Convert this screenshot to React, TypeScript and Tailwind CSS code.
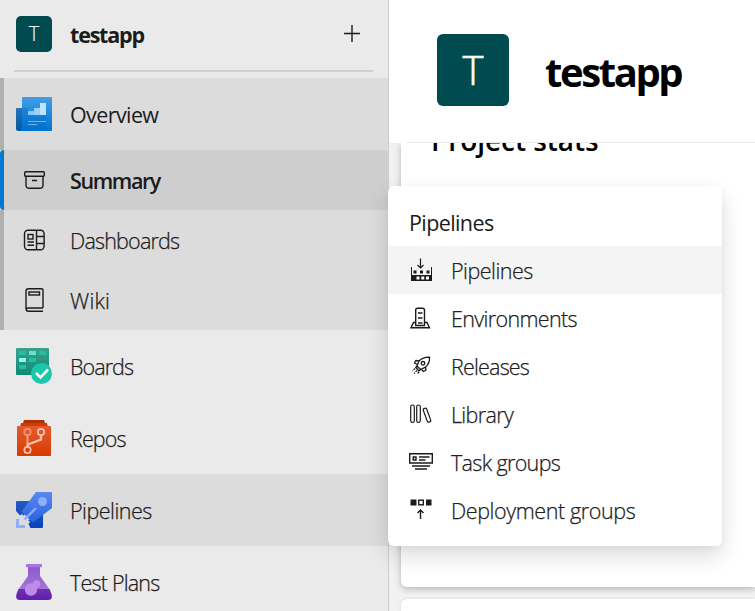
import type { ReactNode } from "react";

const stroke = { fill: "none", stroke: "#1b1b1b", strokeWidth: 1.4 } as const;

function OverviewIcon() {
  return (
    <svg width="36" height="36" viewBox="0 0 36 36">
      <defs>
        <linearGradient id="ov" x1="0" y1="0" x2="0" y2="1">
          <stop offset="0" stopColor="#439de4" />
          <stop offset="1" stopColor="#0074d3" />
        </linearGradient>
        <linearGradient id="ovb" x1="0" y1="0" x2="0" y2="1">
          <stop offset="0" stopColor="#2874b5" />
          <stop offset="1" stopColor="#0059a4" />
        </linearGradient>
      </defs>
      <path d="M1 12H8V35H2.500Q0 35 0 32.500V13Q0 12 1 12Z" fill="url(#ovb)" />
      <path d="M7 1H35Q36 1 36 2V34Q36 35 35 35H4Q6 34 6 31V2Q6 1 7 1Z" fill="url(#ov)" />
      <path d="M6 12H12V18H30V35H4Q6 34 6 31Z" fill="#0067c5" opacity=".3" />
      <path d="M12 15H18V12H24V19H12Z" fill="#86c8ff" />
      <path d="M18 12H24V7H30V19H18Z" fill="#9ad1fc" />
      <path d="M24 7H30V19H24Z" fill="#c0e3ff" />
      <path d="M12 25.500H30M12 28.500H21" stroke="#69b5f3" strokeWidth="1" />
    </svg>
  );
}

function BoardsIcon() {
  return (
    <svg width="36" height="36" viewBox="0 0 36 36">
      <defs>
        <linearGradient id="bd" x1="0" y1="0" x2="0" y2="1">
          <stop offset="0" stopColor="#37a38e" />
          <stop offset="1" stopColor="#118a73" />
        </linearGradient>
      </defs>
      <rect width="33" height="27" rx="1" fill="url(#bd)" />
      <path d="M3 3H10V7H3ZM23 3H30V7H23ZM13 10H20V14H13ZM3 17H10V21H3Z" fill="#27bda2" />
      <path d="M13 3H20V7H13Z" fill="#66e4cb" />
      <path d="M3 10H10V14H3Z" fill="#85ffe8" />
      <circle cx="25.500" cy="25.500" r="10.500" fill="#1bc6ab" />
      <path d="M20 25L24.500 29.500L32 21.500" fill="none" stroke="#f4fffd" strokeWidth="2.600" />
    </svg>
  );
}

function ReposIcon() {
  return (
    <svg width="36" height="36" viewBox="0 0 36 36">
      <defs>
        <linearGradient id="rp" x1="0" y1="0" x2="0" y2="1">
          <stop offset="0" stopColor="#e35b30" />
          <stop offset="1" stopColor="#d83b01" />
        </linearGradient>
      </defs>
      <path d="M8 0H28L29 3V6H7V3Z" fill="#b23100" />
      <path d="M5 3H31L32 7H4Z" fill="#d13c05" />
      <rect x="1" y="6" width="34" height="30" rx="1" fill="url(#rp)" />
      <g fill="none" stroke="#ffc1ab" strokeWidth="1.700">
        <circle cx="11.500" cy="12" r="3.200" stroke="#f3946f" />
        <circle cx="25" cy="12" r="3.200" />
        <circle cx="11.500" cy="30" r="3.200" />
        <path d="M11.500 15.500V26" stroke="#f3946f" strokeWidth="2.400" />
        <path d="M25 15.500V19.500L12 24.500V27" strokeWidth="2.400" />
      </g>
    </svg>
  );
}

function RocketIcon() {
  return (
    <svg width="36" height="36" viewBox="0 0 36 36">
      <defs>
        <linearGradient id="pl" x1="0" y1="0" x2="0" y2="1">
          <stop offset="0" stopColor="#5989f0" />
          <stop offset="1" stopColor="#2864de" />
        </linearGradient>
        <linearGradient id="plb" x1="0" y1="0" x2="0" y2="1">
          <stop offset="0" stopColor="#2458c2" />
          <stop offset="1" stopColor="#0b43bd" />
        </linearGradient>
      </defs>
      <path d="M1 9H17L27 20V35Q27 36 26 36H14.500L12.500 32L14 30L6 22L4 23.500L0 19V10Q0 9 1 9Z" fill="url(#plb)" />
      <path d="M20 0H35Q36 0 36 1V16L17 30.500L13.500 28L8 22.500L5.500 19.500Z" fill="url(#pl)" />
      <path d="M8.500 22.500L13.500 27.500L11 29L7 25Z" fill="#dcdcdc" />
      <path d="M20 16L8.500 27.500" stroke="#8aabff" strokeWidth="2.400" />
      <circle cx="26.500" cy="9.500" r="4.500" fill="#8faeff" />
      <path d="M0 27H3V33H9V36H0Z" fill="#8faeff" />
    </svg>
  );
}

function FlaskIcon() {
  return (
    <svg width="36" height="36" viewBox="0 0 36 36">
      <defs>
        <linearGradient id="fl" x1="0" y1="0" x2="0" y2="1">
          <stop offset="0" stopColor="#9158cf" />
          <stop offset="1" stopColor="#a077d6" />
        </linearGradient>
        <linearGradient id="fb" x1="0" y1="0" x2="0" y2="1">
          <stop offset="0" stopColor="#742cb4" />
          <stop offset="1" stopColor="#5d20ab" />
        </linearGradient>
      </defs>
      <path d="M12 3H24V12L34 26H2L12 12Z" fill="url(#fl)" />
      <path d="M2.500 25H33.500L35.500 30Q37 36 32 36H4Q-1 36 .5 30Z" fill="url(#fb)" />
      <rect x="10" y="0" width="16" height="3.200" rx=".8" fill="#a976e0" />
      <circle cx="20.500" cy="20" r="3.800" fill="#bd8ae9" />
      <circle cx="15" cy="25.500" r="6.200" fill="#bd8ae9" />
    </svg>
  );
}

function SummaryIcon() {
  return (
    <svg width="24" height="24" viewBox="0 0 24 24" {...stroke}>
      <rect x="2.700" y="3.700" width="19.600" height="4.600" rx="1" />
      <path d="M4 8.500V17Q4 20.300 7.300 20.300H17.700Q21 20.300 21 17V8.500M10 12.500H15" />
    </svg>
  );
}

function DashboardsIcon() {
  return (
    <svg width="24" height="24" viewBox="0 0 24 24" {...stroke}>
      <rect x="2.500" y="2.200" width="19.600" height="19.600" rx="3.500" />
      <path d="M14.500 2V22M14.500 8.500H22M14.500 15.500H22M5.500 14H12M5.500 17.300H12" />
      <rect x="6" y="6.500" width="5" height="4.500" />
    </svg>
  );
}

function WikiIcon() {
  return (
    <svg width="24" height="24" viewBox="0 0 24 24" {...stroke}>
      <path d="M21 20V2Q21 .7 19.500 .7H6.500Q4 .7 4 3V20.500Q4 23.300 6.500 23.300H21M4.200 21Q4.500 20 6 20H21" />
      <rect x="7" y="4" width="10.500" height="3" />
    </svg>
  );
}

function MenuPipelinesIcon() {
  return (
    <svg width="24" height="24" viewBox="0 0 24 24">
      <path d="M2 9H3V17H22V9H23V23H2Z" fill="#1b1b1b" />
      <path d="M4.500 12.500H7.500V15.500H4.500ZM11 12.500H14V15.500H11ZM17.500 12.500H20.500V15.500H17.500Z" fill="#1b1b1b" />
      <path d="M7.500 18.500H10.500V21.500H7.500ZM12.300 18.500H15.300V21.500H12.300ZM17 18.500H20V21.500H17Z" fill="#fff" />
      <path d="M11.500 .5V9.500M8.500 7L11.500 10L14.500 7" {...stroke} strokeWidth="1.200" />
    </svg>
  );
}

function EnvironmentsIcon() {
  return (
    <svg width="24" height="24" viewBox="0 0 24 24" {...stroke}>
      <path d="M6.700 19.500V4Q6.700 2.200 8.500 2.200H13.500Q15.500 2.200 15.500 4V19.500Z" />
      <path d="M6.500 16.500H4.500L2 21.800H20.500L18 16.500H15.700M9 7H13.500M9 12H13.500M9 17H13.500" />
    </svg>
  );
}

function ReleasesIcon() {
  return (
    <svg width="24" height="24" viewBox="0 0 24 24" {...stroke} strokeWidth="1.300">
      <path d="M8 12L10 7Q14 3 20.500 3.200Q21 9 16.500 13.200L11.500 15.500Z" />
      <circle cx="14" cy="9.300" r="1.800" />
      <path d="M10 7L7 6.500L5.500 9L8.500 10.500M16.500 13.200L17 16L14.500 17.500L12.500 15.500M8 12L6.800 13.500L10 17L11.500 15.500" />
      <path d="M6 14.500L3.500 17M8 16.500L5 19.500M10 18L8.500 19.500" strokeDasharray="2 1" />
    </svg>
  );
}

function LibraryIcon() {
  return (
    <svg width="24" height="24" viewBox="0 0 24 24" {...stroke} strokeWidth="1.200">
      <rect x="1.700" y="3" width="3.600" height="17.500" rx="1.700" />
      <rect x="7.700" y="3" width="3.600" height="17.500" rx="1.700" />
      <rect x="16.200" y="6" width="3.600" height="14.300" rx="1.200" transform="rotate(-20 18 13.150)" />
    </svg>
  );
}

function TaskGroupsIcon() {
  return (
    <svg width="24" height="24" viewBox="0 0 24 24" {...stroke}>
      <path d="M.7 3.700H23.300V13H.7ZM10 7H20.500M10 10H16.500M3 16H21M6 19H18" />
      <path d="M4.200 7H7V10H4.200Z" />
    </svg>
  );
}

function DeploymentIcon() {
  return (
    <svg width="24" height="24" viewBox="0 0 24 24">
      <path d="M1.500 1.500H7.500V7.500H1.500ZM17 1.500H22.500V7.500H17Z" fill="#1b1b1b" />
      <rect x="9.700" y="2.200" width="4.600" height="4.600" {...stroke} />
      <path d="M11.500 21V12M8.500 15L11.500 12L14.500 15" {...stroke} />
    </svg>
  );
}

function HubRow({ icon, label, className = "", text = "" }: { icon: ReactNode; label: string; className?: string; text?: string }) {
  return (
    <a className={`flex h-[72px] shrink-0 items-center gap-[18px] pl-4 ${className}`}>
      {icon}
      <span className={`pt-0.5 ${text}`}>{label}</span>
    </a>
  );
}

function SubRow({ icon, label, className = "border-[#b0b0b0]", text = "" }: { icon: ReactNode; label: string; className?: string; text?: string }) {
  return (
    <a className={`flex h-[60px] shrink-0 items-center gap-6 border-l-4 pl-[18px] ${className}`}>
      {icon}
      <span className={`pt-0.5 ${text}`}>{label}</span>
    </a>
  );
}

const menuItems = [
  { label: "Pipelines", icon: <MenuPipelinesIcon />, row: "bg-[#f4f4f4]", text: "tracking-[-0.5px]" },
  { label: "Environments", icon: <EnvironmentsIcon />, row: "", text: "tracking-[-0.65px]" },
  { label: "Releases", icon: <ReleasesIcon />, row: "", text: "tracking-[-0.8px]" },
  { label: "Library", icon: <LibraryIcon />, row: "", text: "tracking-[-0.65px]" },
  { label: "Task groups", icon: <TaskGroupsIcon />, row: "", text: "tracking-[-0.65px]" },
  { label: "Deployment groups", icon: <DeploymentIcon />, row: "", text: "tracking-[-0.4px]" },
];

function PipelinesMenu() {
  return (
    <div className="absolute left-[388px] top-[186px] h-[360px] w-[334px] rounded-md bg-white pt-3 text-[#202020] shadow-[0_10px_22px_rgba(0,0,0,0.14),0_2px_6px_rgba(0,0,0,0.04)]">
      <div className="flex h-12 items-center pl-[21px] pt-0.5 font-medium tracking-[-0.6px] text-[#1b1b1b]">Pipelines</div>
      {menuItems.map((item) => (
        <div key={item.label} className={`flex h-12 items-center gap-[18px] pl-[21px] ${item.row}`}>
          {item.icon}
          <span className={`whitespace-nowrap pt-0.5 font-light [-webkit-text-stroke:0.25px] ${item.text}`}>{item.label}</span>
        </div>
      ))}
    </div>
  );
}

export default function App() {
  return (
    <div className="relative flex h-[611px] w-[755px] overflow-hidden bg-white font-['Open_Sans','Noto_Sans',sans-serif] text-[21.5px] leading-[30px] text-[#1b1b1b]">
      <nav className="flex w-[389px] shrink-0 flex-col border-r border-[#cecece] bg-[#eaeaea]">
        <div className="h-[78px] shrink-0 pt-4">
          <div className="flex h-9 items-center pl-4 pr-[27px]">
            <div className="flex size-9 items-center justify-center rounded-[5px] bg-[#004b50] text-[20px] font-light text-[#edf3f3] [-webkit-text-stroke:0.2px]">T</div>
            <span className="ml-[18px] grow pt-0.5 font-bold tracking-[-1.2px] text-[#1b1b1b]">testapp</span>
            <svg width="18" height="18" viewBox="0 0 18 18" {...stroke}>
              <path d="M9 0V17M1 8.500H17" />
            </svg>
          </div>
          <div className="ml-3.5 mr-[15px] mt-[18px] h-0.5 bg-[#d0d0d0]" />
        </div>
        <HubRow icon={<OverviewIcon />} label="Overview" className="border-l-4 border-[#b0b0b0] bg-[#dcdcdc] !pl-3" text="font-medium tracking-[-0.6px]" />
        <div className="flex flex-col bg-[#dcdcdc]">
          <SubRow icon={<SummaryIcon />} label="Summary" className="rounded-sm border-[#0078d4] bg-[#cecece]" text="font-semibold tracking-[-1.4px]" />
          <SubRow icon={<DashboardsIcon />} label="Dashboards" text="font-light [-webkit-text-stroke:0.25px] tracking-[-0.8px]" />
          <SubRow icon={<WikiIcon />} label="Wiki" text="font-light [-webkit-text-stroke:0.25px] tracking-[0.2px]" />
        </div>
        <HubRow icon={<BoardsIcon />} label="Boards" text="font-light [-webkit-text-stroke:0.25px] tracking-[-0.95px]" />
        <HubRow icon={<ReposIcon />} label="Repos" text="font-light [-webkit-text-stroke:0.25px] tracking-[-0.9px]" />
        <HubRow icon={<RocketIcon />} label="Pipelines" className="bg-[#dcdcdc]" text="font-light [-webkit-text-stroke:0.25px] tracking-[-0.5px]" />
        <HubRow icon={<FlaskIcon />} label="Test Plans" text="font-light [-webkit-text-stroke:0.25px] tracking-[-0.8px]" />
      </nav>
      <main className="flex grow flex-col">
        <header className="flex h-[143px] shrink-0 flex-col justify-between bg-white">
          <div className="flex items-center pl-12 pt-[34px]">
            <div className="flex size-[72px] items-center justify-center rounded-md bg-[#004b50] text-[40px] font-light text-white [-webkit-text-stroke:0.6px]">T</div>
            <h1 className="ml-9 pt-1 text-[40px] font-bold leading-[50px] tracking-[-2.4px] text-black">testapp</h1>
          </div>
          <div className="ml-[18px] h-px bg-[#eaeaea]" />
        </header>
        <section className="flex grow flex-col gap-3 overflow-hidden bg-[#f1f1f1] pl-3">
          <div className="h-[444px] shrink-0 rounded-bl-md bg-white pl-[30px] shadow-[0_2px_6px_rgba(0,0,0,0.25)]">
            <h2 className="-mt-[23px] text-[28px] font-semibold leading-10 tracking-[-0.05px] text-black">Project stats</h2>
          </div>
          <div className="h-10 shrink-0 rounded-tl-md bg-white shadow-[0_0_3px_rgba(0,0,0,0.12)]" />
        </section>
      </main>
      <PipelinesMenu />
    </div>
  );
}
